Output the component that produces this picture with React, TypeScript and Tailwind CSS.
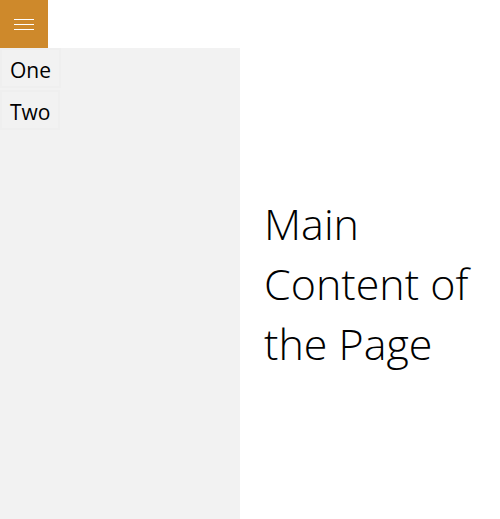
const App = () => {
  return (
    <div className="w-[500px] h-[519px] flex flex-col bg-white font-['Open_Sans',sans-serif] overflow-hidden">
      {/* Header */}
      <div className="h-12 flex shrink-0">
        <button className="w-12 h-12 bg-[#ce892b] flex flex-col items-center justify-center gap-1">
          <span className="block w-5 h-px bg-white" />
          <span className="block w-5 h-px bg-white" />
          <span className="block w-5 h-px bg-white" />
        </button>
      </div>

      <div className="flex flex-1">
        {/* Pane */}
        <nav className="w-60 bg-[#f2f2f2] flex flex-col items-start gap-0.5">
          <button className="h-10 px-2 pt-1 border-2 border-[#efefef] text-[21px] leading-none text-black">
            One
          </button>
          <button className="h-10 px-2 pt-1 border-2 border-[#efefef] text-[21px] leading-none text-black">
            Two
          </button>
        </nav>

        {/* Main content */}
        <main className="flex-1 flex items-center pl-6">
          <h1 className="w-[215px] text-[43px] leading-[60px] font-light text-black">
            Main Content of the Page
          </h1>
        </main>
      </div>
    </div>
  );
};

export default App;
